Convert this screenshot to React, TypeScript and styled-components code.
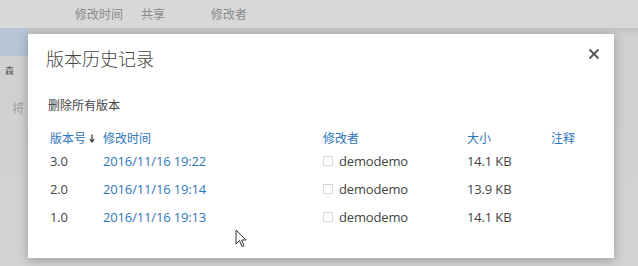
import React from 'react';
import styled, { createGlobalStyle } from 'styled-components';

const GlobalStyle = createGlobalStyle`
    html, body {
        margin: 0;
        padding: 0;
        background: #d5d5d5;
        font-family: "Open Sans", "Noto Sans CJK SC", sans-serif;
        overflow: hidden;
    }
`;

interface Version {
    no: string;
    time: string;
    editor: string;
    size: string;
}

const versions: Version[] = [
    { no: '3.0', time: '2016/11/16 19:22', editor: 'demodemo', size: '14.1 KB' },
    { no: '2.0', time: '2016/11/16 19:14', editor: 'demodemo', size: '13.9 KB' },
    { no: '1.0', time: '2016/11/16 19:13', editor: 'demodemo', size: '14.1 KB' },
];

const App: React.FC = () => {
    return (
        <>
            <GlobalStyle />
            <Page>
                <TopBar>
                    <TopLabel width={66}>修改时间</TopLabel>
                    <TopLabel width={70}>共享</TopLabel>
                    <TopLabel width={80}>修改者</TopLabel>
                </TopBar>
                <Body>
                    <Side>
                        <Selected />
                        <SideMark>森</SideMark>
                        <SideText>将</SideText>
                    </Side>
                </Body>

                <Dialog>
                    <Header>
                        <Title>版本历史记录</Title>
                        <Close aria-label="Close">
                            <svg width="12" height="12" viewBox="0 0 12 12">
                                <path d="M1.5 1.5 L10.5 10.5 M10.5 1.5 L1.5 10.5" stroke="#555" strokeWidth="1.8" />
                            </svg>
                        </Close>
                    </Header>
                    <DeleteAll>删除所有版本</DeleteAll>
                    <Table>
                        <HeadRow>
                            <Cell link>版本号
                                <Arrow width="6" height="9" viewBox="0 0 6 9">
                                    <path d="M3 0.5 V7.5 M0.8 5 L3 8 L5.2 5" stroke="#333" strokeWidth="1.2" fill="none" />
                                </Arrow>
                            </Cell>
                            <Cell link>修改时间</Cell>
                            <Cell link>修改者</Cell>
                            <Cell link>大小</Cell>
                            <Cell link>注释</Cell>
                        </HeadRow>
                        {versions.map(v => (
                            <Row key={v.no}>
                                <Cell>{v.no}</Cell>
                                <Cell link>{v.time}</Cell>
                                <Cell><Box />{v.editor}</Cell>
                                <Cell>{v.size}</Cell>
                                <Cell></Cell>
                            </Row>
                        ))}
                    </Table>
                    <Cursor width="12" height="19" viewBox="0 0 12 19">
                        <path d="M1 1 L1 15 L4.5 11.5 L7 17.5 L9 16.6 L6.6 11 L11 11 Z" fill="#fff" stroke="#333" strokeWidth="1" strokeLinejoin="round" />
                    </Cursor>
                </Dialog>
            </Page>
        </>
    );
}

const Page = styled.div`
    position: relative;
    width: 638px;
    height: 266px;
    display: flex;
    flex-direction: column;
    background: #d2d2d2;
`;

const TopBar = styled.div`
    height: 28px;
    display: flex;
    align-items: center;
    padding-left: 75px;
    background: #d8d8d8;
`;

const TopLabel = styled.div<{ width: number }>`
    width: ${props => props.width}px;
    font-size: 12px;
    color: #8a8a8a;
`;

const Body = styled.div`
    flex: 1;
    display: flex;
    background: linear-gradient(#c4c4c4 0, #d0d0d0 10px, #d3d3d3 100%);
`;

const Side = styled.div`
    width: 28px;
    display: flex;
    flex-direction: column;
`;

const Selected = styled.div`
    height: 28px;
    background: #b6c6d6;
`;

const SideMark = styled.div`
    margin-top: 8px;
    padding-left: 5px;
    font-size: 9px;
    color: #555;
`;

const SideText = styled.div`
    margin-top: 22px;
    padding-left: 12px;
    font-size: 12px;
    color: #a0a0a0;
`;

const Dialog = styled.div`
    position: absolute;
    left: 28px;
    top: 34px;
    width: 586px;
    height: 224px;
    background: #fff;
    box-shadow: 0 2px 10px rgba(0, 0, 0, 0.28);
    padding: 12px 13px 0 18px;
    box-sizing: border-box;
`;

const Header = styled.div`
    display: flex;
    justify-content: space-between;
    align-items: flex-start;
`;

const Title = styled.h2`
    margin: 0;
    font-size: 18px;
    font-weight: 300;
    color: #444;
    line-height: 26px;
`;

const Close = styled.button`
    border: none;
    background: transparent;
    padding: 0;
    margin-top: 1px;
    width: 14px;
    height: 14px;
    display: flex;
    align-items: center;
    justify-content: center;
`;

const DeleteAll = styled.div`
    margin-top: 24px;
    padding-left: 2px;
    font-size: 12px;
    color: #444;
`;

const Table = styled.div`
    margin-top: 15px;
    padding-left: 4px;
    display: flex;
    flex-direction: column;
`;

const HeadRow = styled.div`
    display: grid;
    grid-template-columns: 53px 220px 144px 84px 1fr;
    height: 18px;
    align-items: center;
    font-size: 12px;
`;

const Row = styled(HeadRow)`
    height: 28px;
    font-size: 13px;
    letter-spacing: -0.15px;
`;

const Cell = styled.div<{ link?: boolean }>`
    color: ${props => props.link ? '#2e76bb' : '#444'};
    display: flex;
    align-items: center;
    white-space: nowrap;
`;

const Arrow = styled.svg`
    margin-left: 3px;
`;

const Box = styled.span`
    width: 8px;
    height: 8px;
    border: 1px solid #d8d8d8;
    margin-right: 6px;
`;

const Cursor = styled.svg`
    position: absolute;
    left: 207px;
    top: 195px;
`;

export default App;
